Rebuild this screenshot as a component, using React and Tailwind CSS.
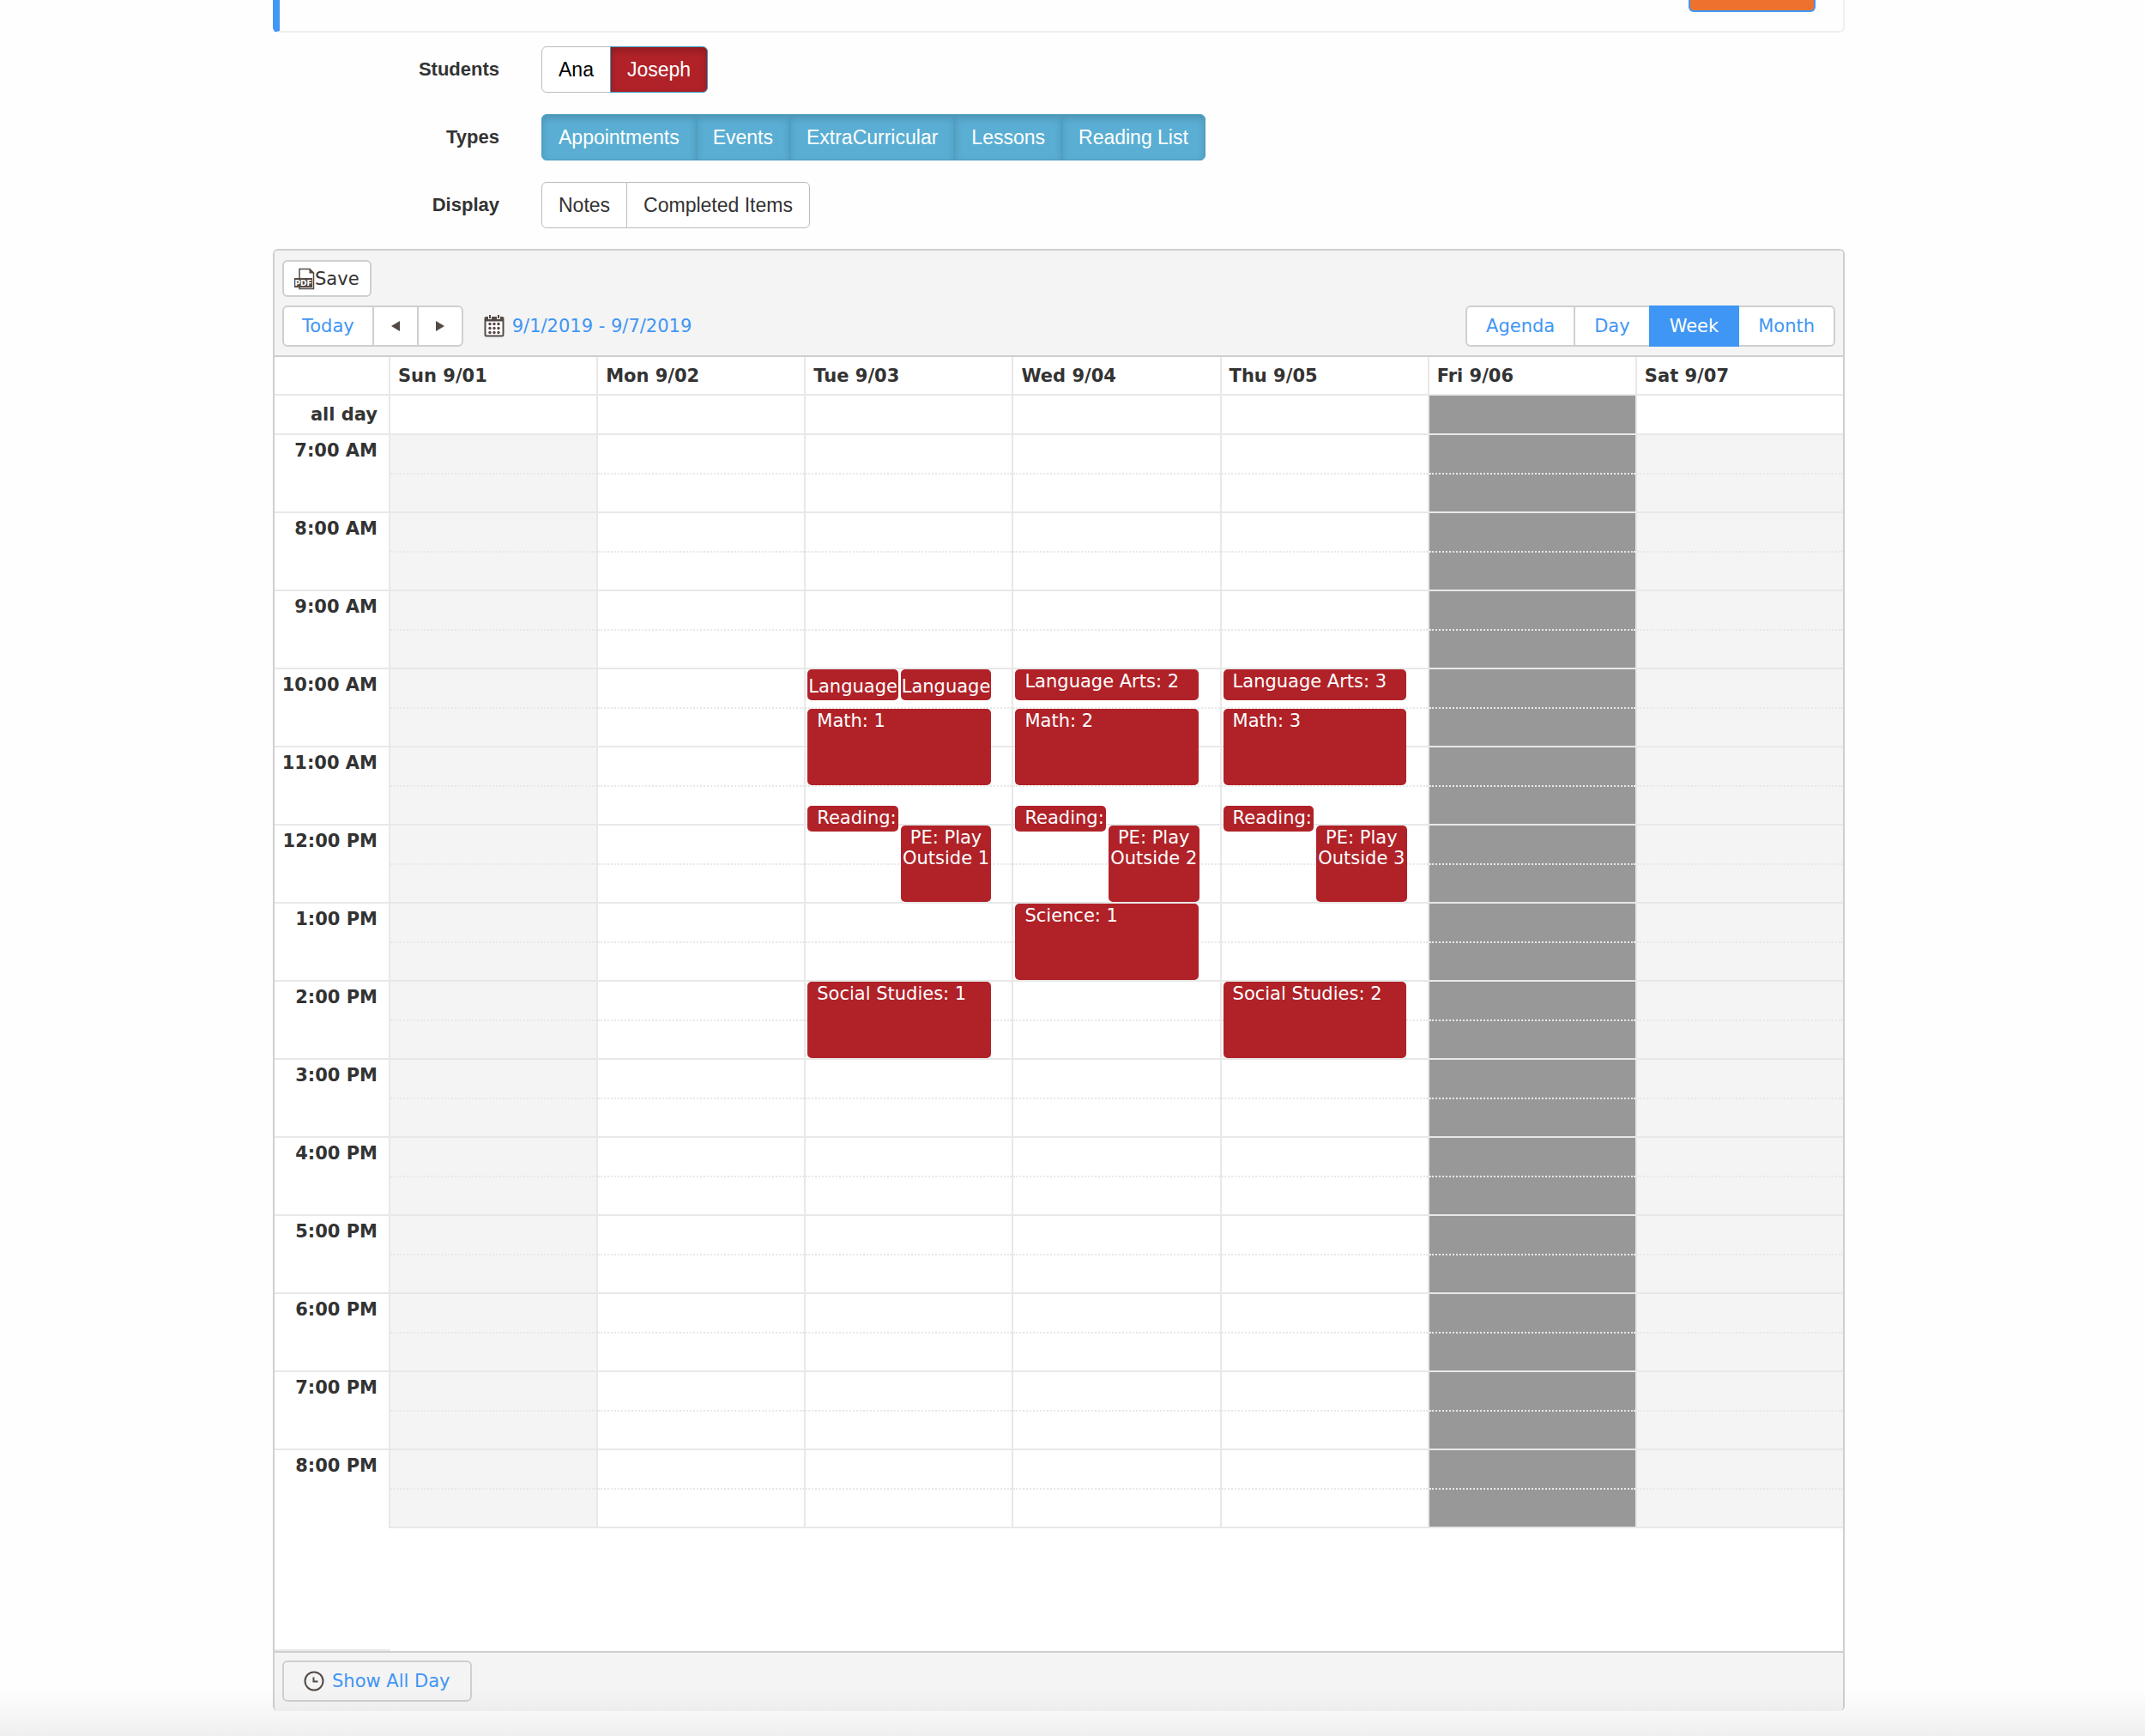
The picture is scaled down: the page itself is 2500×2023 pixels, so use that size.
import React, { useState } from 'react'
import clsx from 'clsx'

const days = ['Sun 9/01', 'Mon 9/02', 'Tue 9/03', 'Wed 9/04', 'Thu 9/05', 'Fri 9/06', 'Sat 9/07']

const hours = [
  '7:00 AM', '8:00 AM', '9:00 AM', '10:00 AM', '11:00 AM', '12:00 PM', '1:00 PM',
  '2:00 PM', '3:00 PM', '4:00 PM', '5:00 PM', '6:00 PM', '7:00 PM', '8:00 PM'
]

const HOUR_HEIGHT = 91

// day and hour are indexes into the lists above, start is minutes past that hour
const events = [
  { day: 2, hour: 3, start: 0, length: 25, side: 'left', center: true, low: true, title: 'Language' },
  { day: 2, hour: 3, start: 0, length: 25, side: 'right', center: true, low: true, title: 'Language' },
  { day: 2, hour: 3, start: 30, length: 60, title: 'Math: 1' },
  { day: 2, hour: 4, start: 45, length: 21, side: 'left', title: 'Reading:' },
  { day: 2, hour: 5, start: 0, length: 60, side: 'right', center: true, title: 'PE: Play Outside 1' },
  { day: 2, hour: 7, start: 0, length: 60, title: 'Social Studies: 1' },
  { day: 3, hour: 3, start: 0, length: 25, title: 'Language Arts: 2' },
  { day: 3, hour: 3, start: 30, length: 60, title: 'Math: 2' },
  { day: 3, hour: 4, start: 45, length: 21, side: 'left', title: 'Reading:' },
  { day: 3, hour: 5, start: 0, length: 60, side: 'right', center: true, title: 'PE: Play Outside 2' },
  { day: 3, hour: 6, start: 0, length: 60, title: 'Science: 1' },
  { day: 4, hour: 3, start: 0, length: 25, title: 'Language Arts: 3' },
  { day: 4, hour: 3, start: 30, length: 60, title: 'Math: 3' },
  { day: 4, hour: 4, start: 45, length: 21, side: 'left', title: 'Reading:' },
  { day: 4, hour: 5, start: 0, length: 60, side: 'right', center: true, title: 'PE: Play Outside 3' },
  { day: 4, hour: 7, start: 0, length: 60, title: 'Social Studies: 2' }
]

const PdfIcon = () => (
  <svg width="24" height="26" viewBox="0 0 24 26" fill="none">
    <path d="M6 13V1.5H18L22.5 6V24.5H6V22" stroke="#544a45" strokeWidth="1.5" />
    <path d="M17.5 1V6.5H23.5Z" fill="#544a45" />
    <rect x="0" y="12" width="21" height="11" fill="#544a45" />
    <text x="10.5" y="21" textAnchor="middle" fill="#fff" fontSize="9" fontWeight="700" fontFamily="DejaVu Sans">PDF</text>
  </svg>
)

const CalendarIcon = () => (
  <svg width="24" height="26" viewBox="0 0 24 26" fill="none">
    <path d="M2.5 2H21.5Q23.5 2 23.5 4V23Q23.5 25.5 21.5 25.5H2.5Q0.5 25.5 0.5 23V4Q0.5 2 2.5 2Z" fill="#544a45" />
    <path d="M2.5 7.5H21.5V23.5H2.5Z" fill="#fff" />
    <path d="M7 0V5M17 0V5" stroke="#f4f4f4" strokeWidth="4" />
    <path d="M7 0V4M17 0V4" stroke="#544a45" strokeWidth="2" />
    {[10.5, 15.5, 20.5].map(y => [7, 12, 17].map(x => (
      <circle key={`${x}-${y}`} cx={x} cy={y} r="1.7" fill="#544a45" />
    )))}
  </svg>
)

const ClockIcon = () => (
  <svg width="24" height="24" viewBox="0 0 24 24" fill="none" stroke="#544a45" strokeWidth="2">
    <circle cx="12" cy="12" r="10.5" />
    <path d="M11.5 7.5V12.5H16.5" />
  </svg>
)

const Arrow = ({ d }) => (
  <svg width="10" height="12" viewBox="0 0 10 12" fill="#544a45">
    <path d={d} />
  </svg>
)

const FilterRow = ({ label, children }) => (
  <div role="group" aria-label={label} className="flex items-center">
    <div className="w-[264px] text-right text-[22px] font-bold text-[#333]">{label}</div>
    <div className="ml-[49px] flex">{children}</div>
  </div>
)

const FilterButton = ({ look = 'plain', children }) => (
  <button
    className={clsx(
      '-ml-px h-[54px] border px-[19px] first:ml-0 first:rounded-l-md last:rounded-r-md',
      look === 'plain' && 'border-[#bbb] bg-white text-[#333]',
      look === 'student' && 'border-[#bbb] bg-white text-black',
      look === 'red' && 'border-[#3d9cc4] bg-[#b02228] text-white shadow-[inset_0_4px_8px_rgba(0,0,0,0.2)]',
      look === 'blue' && 'border-[#4a9dbf] bg-[#5aaed3] text-white shadow-[inset_0_4px_8px_rgba(0,0,0,0.15)]'
    )}
  >
    {children}
  </button>
)

const Event = ({ event }) => (
  <div
    className={clsx(
      'absolute z-10 overflow-hidden rounded-[5px] bg-[#b02228] text-white',
      event.side === 'left' && 'left-[2px] w-[44%]',
      event.side === 'right' && 'left-[46%] w-[44%]',
      !event.side && 'left-[2px] w-[89%]',
      event.low ? 'pt-2' : 'pt-[2px]',
      event.center ? 'text-center' : 'pl-[11px] whitespace-nowrap'
    )}
    style={{
      top: Math.round(event.start / 60 * HOUR_HEIGHT),
      height: Math.round(event.length / 60 * HOUR_HEIGHT) - 2
    }}
  >
    {event.title}
  </div>
)

const dayColor = day => {
  if (day === 5) return 'bg-[#989898]'
  if (day === 0 || day === 6) return 'bg-[#f4f4f4]'
  return ''
}

const Scheduler = () => {
  const [view, setView] = useState('Week')

  return (
    <section className="overflow-hidden rounded-md border-2 border-b-0 border-[#cfcfcf] bg-white font-['DejaVu_Sans',sans-serif] text-[21px] leading-6 text-[#333]">
      <div className="border-b-2 border-[#cfcfcf] bg-[#f4f4f4] px-[9px] pt-[11px] pb-[10px]">
        <button className="flex h-[43px] items-center rounded-md border-2 border-[#cfcfcf] bg-white px-3">
          <PdfIcon />
          Save
        </button>
        <div className="mt-[10px] flex items-center justify-between">
          <div className="flex items-center">
            <div className="flex h-12 divide-x-2 divide-[#cfcfcf] rounded-md border-2 border-[#cfcfcf] bg-white">
              <button className="px-[21px] text-[#3f96f4]">Today</button>
              <button aria-label="Previous week" className="flex w-[52px] items-center justify-center">
                <Arrow d="M10 0V12L0 6Z" />
              </button>
              <button aria-label="Next week" className="flex w-[50px] items-center justify-center">
                <Arrow d="M0 0V12L10 6Z" />
              </button>
            </div>
            <a href="#date" className="ml-[24px] flex items-center gap-[9px] text-[#3f96f4]">
              <CalendarIcon />
              9/1/2019 - 9/7/2019
            </a>
          </div>
          <div className="flex h-12">
            {['Agenda', 'Day', 'Week', 'Month'].map(name => (
              <button
                key={name}
                onClick={_ => setView(name)}
                className={clsx(
                  '-ml-[2px] border-2 px-[22px] first:ml-0 first:rounded-l-md last:rounded-r-md',
                  view === name ? 'z-10 border-[#3f96f4] bg-[#3f96f4] text-white' : 'border-[#cfcfcf] bg-white text-[#3f96f4]'
                )}
              >
                {name}
              </button>
            ))}
          </div>
        </div>
      </div>

      <table className="w-full table-fixed border-separate border-spacing-0">
        <thead>
          <tr className="h-[45px]">
            <td className="w-[133px] border-b-2 border-[#e8e8e8]" />
            {days.map(day => (
              <th key={day} scope="col" className="border-b-2 border-l-2 border-[#e8e8e8] pl-[9px] text-left">{day}</th>
            ))}
          </tr>
          <tr className="h-[46px]">
            <th scope="row" className="border-b-2 border-[#e8e8e8] pr-[13px] text-right">all day</th>
            {days.map((day, i) => (
              <td key={day} className={clsx('border-b-2 border-l-2 border-[#e8e8e8]', i === 5 && 'bg-[#989898]')} />
            ))}
          </tr>
        </thead>
        <tbody>
          {hours.map((hour, h) => (
            <tr key={hour} className="h-[91px]">
              <th
                scope="row"
                className={clsx('pt-[6px] pr-[13px] text-right align-top', h < hours.length - 1 && 'border-b-2 border-[#e8e8e8]')}
              >
                {hour}
              </th>
              {days.map((day, d) => (
                <td key={day} className={clsx('relative border-b-2 border-l-2 border-[#e8e8e8] p-0 align-top', dayColor(d))}>
                  <div className="h-[46px] border-b-2 border-dotted border-[#e8e8e8]" />
                  {events.filter(e => e.day === d && e.hour === h).map((e, i) => (
                    <Event key={i} event={e} />
                  ))}
                </td>
              ))}
            </tr>
          ))}
        </tbody>
      </table>
      <div className="h-[143px]">
        <div className="h-full w-[135px] border-b-2 border-[#e8e8e8]" />
      </div>

      <div className="border-t-2 border-[#cfcfcf] bg-[#f4f4f4] px-[9px] pt-[9px] pb-[11px]">
        <button className="flex h-12 items-center gap-[9px] rounded-md border-2 border-[#cfcfcf] px-[23px] text-[#3f96f4]">
          <ClockIcon />
          Show All Day
        </button>
      </div>
    </section>
  )
}

const App = () => (
  <div className="relative overflow-hidden bg-[#fefefe] pr-[350px] pl-[318px] font-['Liberation_Sans',Arial,sans-serif] text-[23px] leading-8">
    <div className="flex h-[38px] items-start justify-end rounded-b-md border-r-2 border-b-2 border-l-8 border-[#efefef] border-l-[#4296f4] pr-[32px]">
      <button aria-label="Submit" className="h-[14px] w-[148px] rounded-b-md border-2 border-t-0 border-[#4296f4] bg-[#ec722e]" />
    </div>

    <div className="mt-4 flex flex-col gap-[25px]">
      <FilterRow label="Students">
        <FilterButton look="student">Ana</FilterButton>
        <FilterButton look="red">Joseph</FilterButton>
      </FilterRow>
      <FilterRow label="Types">
        <FilterButton look="blue">Appointments</FilterButton>
        <FilterButton look="blue">Events</FilterButton>
        <FilterButton look="blue">ExtraCurricular</FilterButton>
        <FilterButton look="blue">Lessons</FilterButton>
        <FilterButton look="blue">Reading List</FilterButton>
      </FilterRow>
      <FilterRow label="Display">
        <FilterButton>Notes</FilterButton>
        <FilterButton>Completed Items</FilterButton>
      </FilterRow>
    </div>

    <main className="mt-6">
      <Scheduler />
    </main>
    <hr className="mt-[29px] border-t border-[#e4e4e4]" />

    {/* shade along the lower edge of the page */}
    <div className="pointer-events-none absolute inset-x-0 bottom-0 z-20 h-14 bg-linear-to-b from-transparent to-black/6" />
  </div>
)

export default App
